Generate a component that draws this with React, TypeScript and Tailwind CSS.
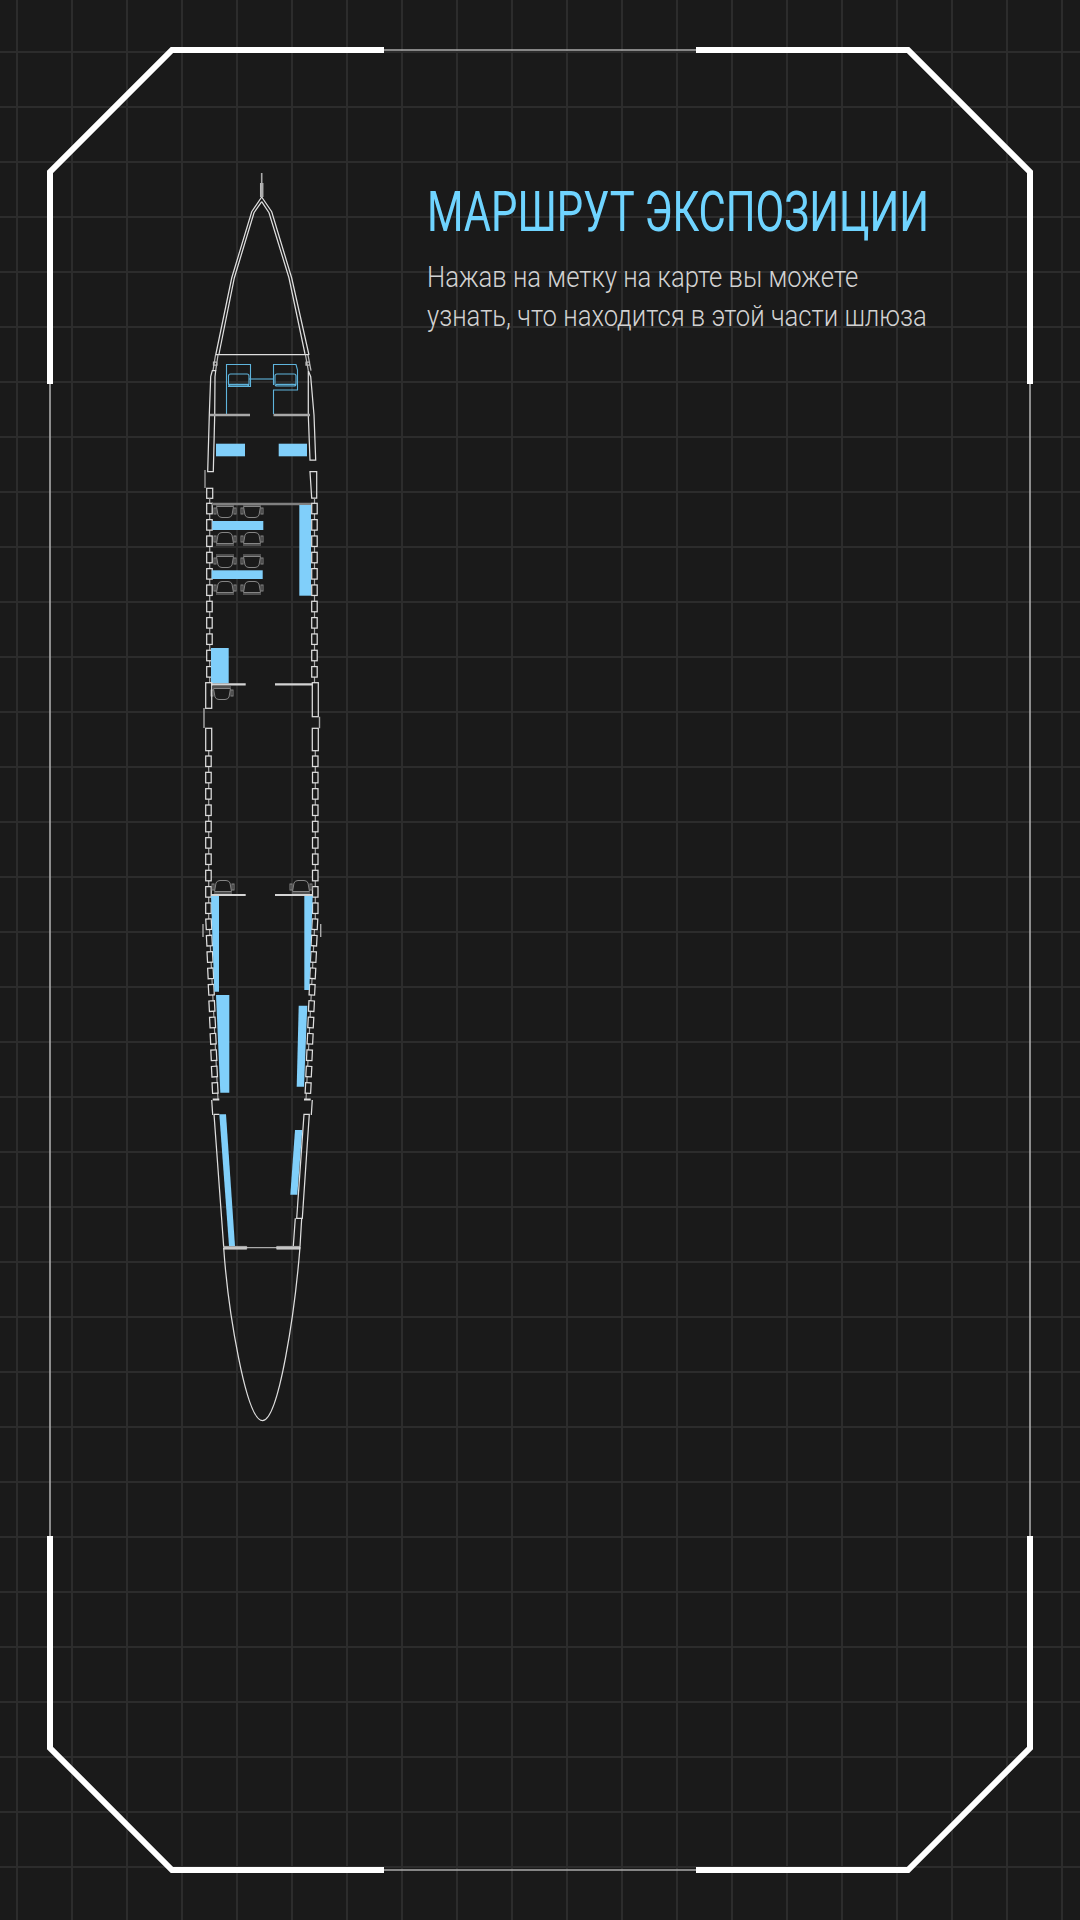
const LINE = "#dedede";
const BLUE = "#80cffa";
const BLUE_LINE = "#5fb4dc";
const SEAT = "#858585";

// window positions, in page pixels
const TOP_ROWS = Array.from({ length: 11 }, (_, i) => 503.3 + i * 16.33);
const MID_ROWS = Array.from({ length: 10 }, (_, i) => 756 + i * 16.33);
const TAPER_ROWS = Array.from({ length: 11 }, (_, i) => ({
  y: 919 + i * 16.37,
  left: 206 + i * 0.63,
  right: 312 - i * 0.66,
}));

const CABIN_SEATS = [
  { y: 511, flip: false },
  { y: 539, flip: true },
  { y: 561, flip: false },
  { y: 588, flip: true },
];

function Seat({ x, y, flip }: { x: number; y: number; flip: boolean }) {
  return (
    <g fill="none" stroke={SEAT} strokeWidth="1" transform={flip ? `translate(0 ${2 * y}) scale(1 -1)` : undefined}>
      <rect x={x - 11} y={y - 3} width="2" height="6" />
      <rect x={x + 9} y={y - 3} width="2" height="6" />
      <path d={`M${x - 8.5} ${y - 4.5}L${x + 8.5} ${y - 4.5}L${x + 7} ${y + 4}Q${x + 6} ${y + 6.5} ${x + 3} ${y + 6.5}L${x - 3} ${y + 6.5}Q${x - 6} ${y + 6.5} ${x - 7} ${y + 4}Z`} />
      <path d={`M${x - 9} ${y - 6}L${x + 9} ${y - 6}`} />
    </g>
  );
}

function Plane() {
  return (
    <svg width="140" height="1260" viewBox="195 170 140 1260" className="block shrink-0">
      {/* nose */}
      <g fill="none" stroke={LINE} strokeWidth="1.25">
        <path d="M261.7 173V197" strokeWidth="1.6" stroke="#aaa" />
        <path d="M260.6 183V197M262.8 183V197" stroke="#bbb" />
        <path d="M261.7 197L251.7 211.7L231.7 278L215.7 355" />
        <path d="M261.7 201.7L254 212.7L234.3 278L219 354" />
        <path d="M261.7 197L271.7 211.7L291.7 278L309 355" />
        <path d="M261.7 201.7L269 212.7L289 278L305 354" />
        <path d="M215.7 354.5H309" />
        <path d="M215.5 355L213 370.7M218 355L215.7 370.7M213.5 362h3.5v3h-3.5zM308 355L311 370.7M305.5 355L308.3 370.7M306 362h3.5v3H306z" stroke="#bbb" />
        <path d="M212.3 370.7L210.7 376.7L209.3 415L207.7 471.7H213.3L214.7 415L215 376.7L215.7 370.7Z" />
        <path d="M308.3 370.7L310.7 376.7L314 415L315.7 460H310L308.3 415V376.7Z" />
        <path d="M310 471.7H316.7V498H311.7Z" />
        <path d="M205 470V488" stroke="#aaa" />
        <rect x="206.7" y="488.3" width="6" height="10" />
      </g>

      {/* cockpit, blue outlines */}
      <g fill="none" stroke={BLUE_LINE} strokeWidth="1.1">
        <path d="M226.5 414V364.5H250.5V386.5H228" />
        <path d="M249 379H273.5" />
        <path d="M273.5 414V390H297.5V370L296 364.5H273.5V385" />
        <rect x="228.5" y="374" width="20.5" height="12" rx="2" />
        <rect x="275" y="374" width="21" height="12" rx="2" />
        <path d="M229 384.5H249M276 384.5H296" strokeWidth="1.5" />
      </g>
      <path d="M210 415H250M273.5 415H310" stroke="#a8a8a8" strokeWidth="2.6" />

      <rect x="216" y="443.7" width="29" height="12.6" fill={BLUE} />
      <rect x="278.7" y="443.7" width="28.3" height="12.6" fill={BLUE} />

      {/* hull between the windows */}
      <path d="M209.7 498V683M314.5 498V683M208.7 750V919M315.3 750V919" stroke="#aaa" strokeWidth="1.2" />
      <path d="M209 919L218 1100M315 919L306 1100" stroke="#aaa" strokeWidth="1.2" />

      {/* windows */}
      <g fill="#1a1a1a" stroke={LINE} strokeWidth="1.25">
        {TOP_ROWS.map((y) => (
          <g key={y}>
            <rect x="206.7" y={y} width="5.5" height="10.5" />
            <rect x="311.7" y={y} width="5.5" height="10.5" />
          </g>
        ))}
        {MID_ROWS.map((y) => (
          <g key={y}>
            <rect x="205.7" y={y} width="5.5" height="10.5" />
            <rect x="312.5" y={y} width="5.5" height="10.5" />
          </g>
        ))}
        {TAPER_ROWS.map((w) => (
          <g key={w.y}>
            <rect x={w.left} y={w.y} width="5.5" height="10.5" transform={`rotate(-3 ${w.left + 3} ${w.y + 5})`} />
            <rect x={w.right} y={w.y} width="5.5" height="10.5" transform={`rotate(3 ${w.right + 3} ${w.y + 5})`} />
          </g>
        ))}
      </g>

      {/* front cabin */}
      <path d="M212 504H311" stroke="#808080" strokeWidth="2.6" />
      {CABIN_SEATS.map((s) => (
        <g key={s.y}>
          <Seat x={225} y={s.y} flip={s.flip} />
          <Seat x={252} y={s.y} flip={s.flip} />
        </g>
      ))}
      <rect x="299.3" y="505" width="11.7" height="90.7" fill={BLUE} />
      <rect x="212.3" y="521" width="51" height="9" fill={BLUE} />
      <rect x="211.7" y="570.3" width="51" height="8.7" fill={BLUE} />
      <rect x="211" y="648" width="17.7" height="35.3" fill={BLUE} />

      {/* middle doors */}
      <path d="M211 684.3H245.7M275 684.3H312.3" stroke="#d4d4d4" strokeWidth="2.2" />
      <Seat x={222} y={693} flip={false} />
      <g fill="none" stroke={LINE} strokeWidth="1.25">
        <rect x="205.7" y="682.7" width="6" height="25.6" />
        <rect x="312.3" y="682.7" width="6" height="34" />
        <rect x="205.7" y="728.3" width="6" height="22.4" />
        <rect x="312.3" y="728.3" width="6" height="22.4" />
      </g>
      <path d="M204 708V728M319.5 716.7V728.3M203 924V937M320.7 924V937" stroke="#aaa" strokeWidth="1.4" />

      {/* rear cabin */}
      <Seat x={223} y={887} flip={true} />
      <Seat x={301} y={887} flip={true} />
      <path d="M211 895H245.7M275 895H312.3" stroke="#d4d4d4" strokeWidth="2.2" />
      <g fill={BLUE}>
        <polygon points="211,896 219,896 219,991.7 214.3,991.7" />
        <polygon points="304.3,896 312.7,896 309.3,990 304.3,990" />
        <polygon points="216,995 229.3,995 229.3,1092.7 220.3,1092.7" />
        <polygon points="298.7,1005.7 307.3,1005.7 304,1086.7 296.7,1086.7" />
        <polygon points="219.3,1114.3 226,1114.3 235,1246 229,1246" />
        <polygon points="295,1130 302.3,1130 297.3,1194.7 290.3,1194.7" />
      </g>

      {/* tail */}
      <g fill="none" stroke={LINE} strokeWidth="1.25">
        <path d="M212.7 1099.5H219.3M304 1099.5H310.7" strokeWidth="2" />
        <path d="M211.7 1100L212.7 1115M312.3 1100L311.3 1115" />
        <path d="M214 1114.3H219.3M214 1114.3L223.7 1246.7" />
        <path d="M304 1114.3H309.3L302.3 1218.3H296.7Z" />
        <path d="M295.3 1218.3L293.3 1246M301.7 1218.3L300 1246.7" />
        <path d="M223.7 1247.7H300" stroke="#aaa" />
        <path d="M223.7 1246.4H246.7V1249.2H223.7ZM276.7 1246.4H300V1249.2H276.7Z" fill="#c4c4c4" stroke="#d4d4d4" strokeWidth="0.6" />
        <path d="M223.7 1248C228 1310 246 1420.7 262.5 1420.7C279 1420.7 295 1310 300 1247" />
      </g>
    </svg>
  );
}

function Frame() {
  return (
    <svg width="1080" height="1920" viewBox="0 0 1080 1920" className="absolute inset-0" fill="none">
      <path d="M384 50H696M50 384V1536M1030 384V1536M384 1870H696" stroke="#aaa" strokeWidth="1.6" />
      <g stroke="#fff" strokeWidth="6">
        <path d="M50 384V172L172 50H384" />
        <path d="M696 50H908L1030 172V384" />
        <path d="M50 1536V1748L172 1870H384" />
        <path d="M1030 1536V1748L908 1870H696" />
      </g>
    </svg>
  );
}

export default function App() {
  return (
    <div className="relative w-[1080px] h-[1920px] overflow-hidden bg-[#1a1a1a] bg-[linear-gradient(#2c2c2c_2px,transparent_2px),linear-gradient(90deg,#2c2c2c_2px,transparent_2px)] bg-[size:55px_55px] bg-[position:16px_51px]">
      <Frame />
      <div className="relative flex items-start pl-[195px] pt-[170px]">
        <Plane />
        <div className="ml-[92px] pt-[10px] whitespace-nowrap font-['Roboto',sans-serif]">
          <h1 className="origin-top-left scale-x-[0.746] text-[56px] leading-[64px] font-normal text-[#6fd4ff]">МАРШРУТ ЭКСПОЗИЦИИ</h1>
          <p className="mt-[14px] origin-top-left scale-x-[0.855] text-[30px] leading-[38.5px] font-light text-[#d2d2d2]">
            Нажав на метку на карте вы можете
            <br />
            узнать, что находится в этой части шлюза
          </p>
        </div>
      </div>
    </div>
  );
}
